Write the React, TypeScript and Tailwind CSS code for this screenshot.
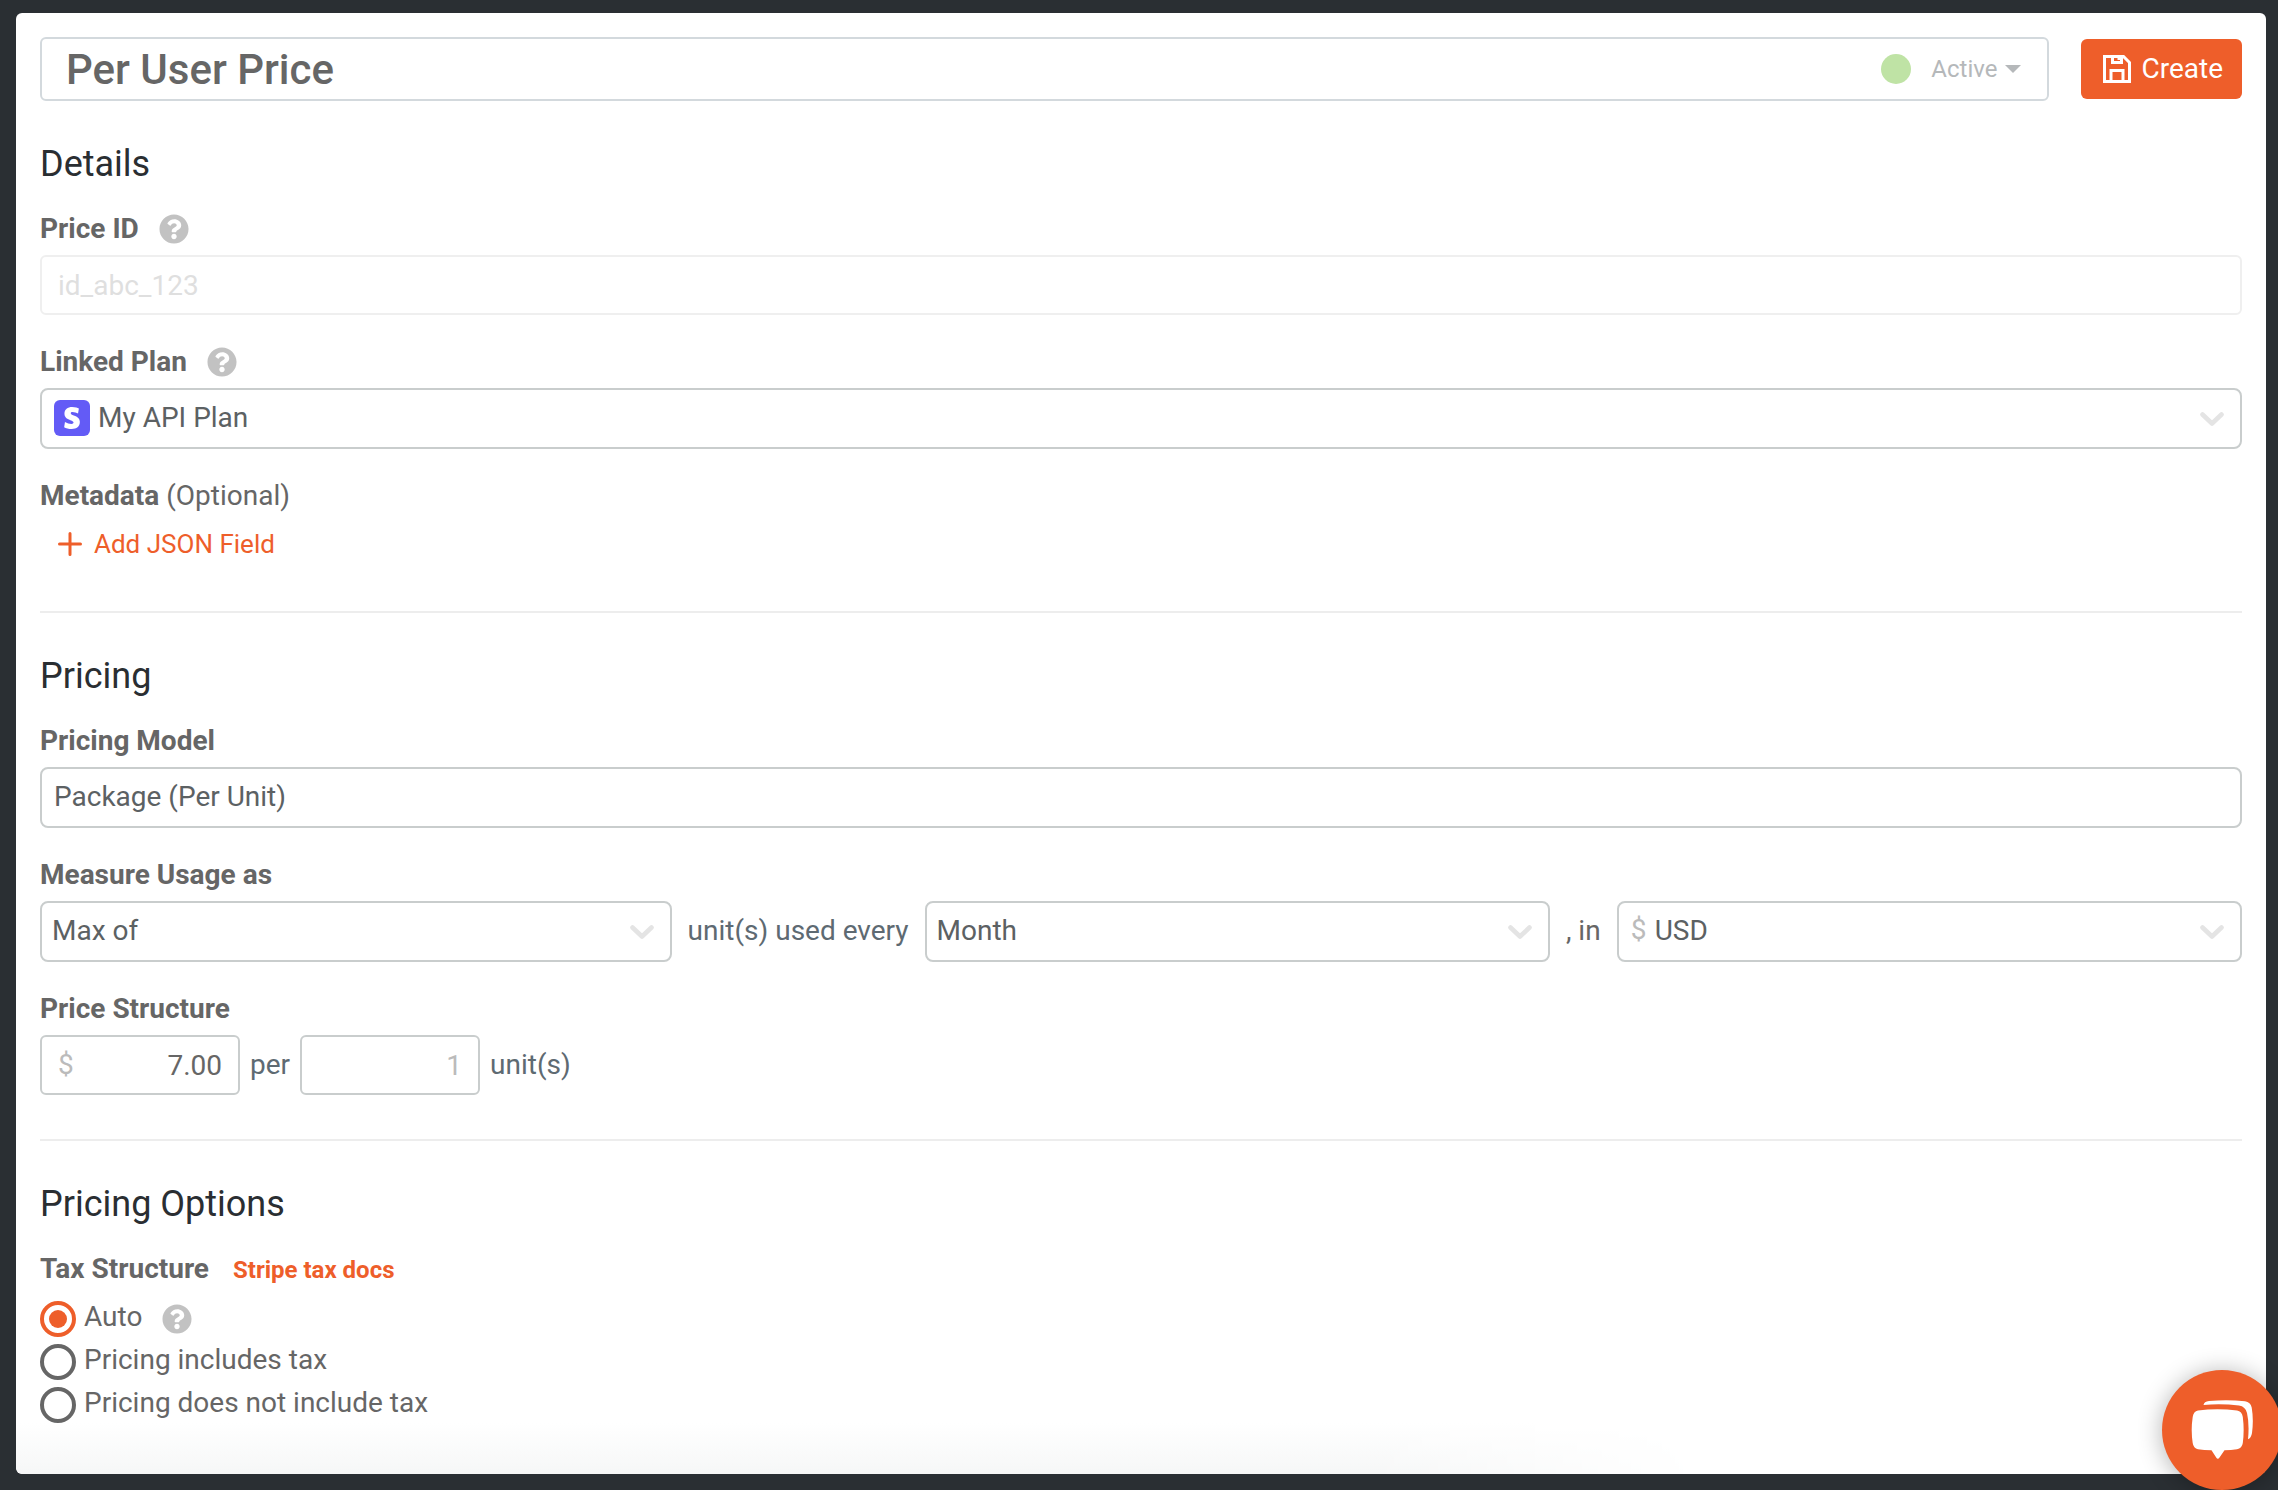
import React, { useState } from 'react';
import { FaQuestionCircle } from 'react-icons/fa';
import { SiStripe } from 'react-icons/si';

const taxOptions = [
  { value: 'auto', label: 'Auto', help: true },
  { value: 'inclusive', label: 'Pricing includes tax', help: false },
  { value: 'exclusive', label: 'Pricing does not include tax', help: false },
];

const SaveIcon: React.FC = () => (
  <svg width="28" height="28" viewBox="0 0 28 28" fill="none" stroke="currentColor" strokeWidth="3" aria-hidden="true">
    <path d="M1.5 1.5H20.5L26.5 7.5V26.5H1.5Z" />
    <path d="M9.5 1.5V7.5H18.5V1.5" />
    <path d="M8 26.5V15.5H20V26.5" />
    <path d="M14.5 4H18" strokeWidth="2" />
  </svg>
);

const Chevron: React.FC = () => (
  <svg
    className="pointer-events-none absolute top-6 right-[18px]"
    width="24"
    height="15"
    viewBox="0 0 24 15"
    fill="none"
    stroke="#e4e4e4"
    strokeWidth="4.6"
    strokeLinecap="round"
    strokeLinejoin="round"
    aria-hidden="true"
  >
    <path d="M2.5 2.5L12 11.5L21.5 2.5" />
  </svg>
);

const ChatIcon: React.FC = () => (
  <svg width="62" height="60" viewBox="0 0 62 60" fill="#fff" aria-hidden="true">
    <path d="M7 10.5Q26.5 8 46 10.5Q51 11.2 51.8 17Q53.5 30 51.8 43Q51 48.5 46 49.2Q40 50 33.5 50.3L28.5 57.5Q26.8 60 25.2 57.5L20.5 50.3Q13 50 7 49.2Q2.5 48.5 1.7 43Q-.3 30 1.7 17Q2.5 11.2 7 10.5Z" />
    <path d="M12.5 5Q13 1.6 18 1Q36-.8 54 1.2Q59.5 2 60.7 7.5Q62.8 20 61 33Q60 38.5 57 39.3Q58.5 24 56 13Q54.5 6.5 48 5.5Q30 3.5 12.5 5Z" />
  </svg>
);

const Help: React.FC<{ text: string }> = ({ text }) => (
  <button type="button" aria-label={text} className="text-[#c2c2c2]">
    <FaQuestionCircle size={30} />
  </button>
);

interface SelectBoxProps {
  id: string;
  label?: string;
  options: string[];
  chevron?: boolean;
  prefix?: React.ReactNode;
  className?: string;
}

const SelectBox: React.FC<SelectBoxProps> = ({ id, label, options, chevron = true, prefix, className = 'pl-2.5' }) => (
  <div className="relative min-w-0">
    {prefix}
    <select
      id={id}
      aria-label={label}
      className={`block h-[61px] w-full appearance-none rounded-lg border-2 border-[#c9cdcd] bg-white pr-12 pb-0.5 text-[28px] text-[#5c6163] ${className}`}
    >
      {options.map(option => (
        <option key={option}>{option}</option>
      ))}
    </select>
    {chevron && <Chevron />}
  </div>
);

const App: React.FC = () => {
  const [name, setName] = useState<string>('Per User Price');
  const [amount, setAmount] = useState<string>('7.00');
  const [tax, setTax] = useState<string>('auto');

  return (
    <div className="flex min-h-screen bg-[#2a2f33] pt-[13px] pr-3 pb-4 pl-4 font-[Roboto,sans-serif] text-[28px] leading-9 text-[#666]">
      <form className="flex flex-1 flex-col rounded-md bg-white px-6 pt-6" onSubmit={e => e.preventDefault()}>
        <header className="mb-[43px] flex items-center gap-8">
          <div className="flex h-16 flex-1 items-center rounded-md border-2 border-[#d3d9dd] pr-[26px] pl-6">
            <input
              aria-label="Price name"
              value={name}
              onChange={e => setName(e.target.value)}
              className="h-full min-w-0 flex-1 text-[42px] font-medium outline-none"
            />
            <button type="button" className="flex items-center text-2xl text-[#b5b8ba]">
              <span className="mr-5 size-[30px] rounded-full bg-[#bfe3a5]" />
              Active
              <svg className="ml-2" width="16" height="8" viewBox="0 0 16 8" fill="currentColor" aria-hidden="true">
                <path d="M0 0H16L8 8Z" />
              </svg>
            </button>
          </div>
          <button type="submit" className="flex h-15 items-center gap-2.5 rounded-md bg-[#ee5e2a] pr-[19px] pl-[22px] text-white">
            <SaveIcon />
            Create
          </button>
        </header>

        <section>
          <h2 className="mb-[27px] text-4xl leading-10 text-[#2a2e32]">Details</h2>
          <div className="flex flex-col gap-[29px]">
            <div>
              <div className="mb-2 flex h-9 items-center gap-5">
                <label htmlFor="price-id" className="font-bold">Price ID</label>
                <Help text="About price IDs" />
              </div>
              <input
                id="price-id"
                placeholder="id_abc_123"
                className="block h-15 w-full rounded-md border-2 border-[#efefef] px-4 placeholder:text-[#dfdfdf]"
              />
            </div>
            <div>
              <div className="mb-2 flex h-9 items-center gap-5">
                <label htmlFor="linked-plan" className="font-bold">Linked Plan</label>
                <Help text="About linked plans" />
              </div>
              <SelectBox
                id="linked-plan"
                options={['My API Plan']}
                className="pl-14"
                prefix={
                  <span className="pointer-events-none absolute top-3 left-3.5 flex size-9 items-center justify-center rounded-md bg-[#635bf6] text-white">
                    <SiStripe size={22} />
                  </span>
                }
              />
            </div>
            <div>
              <p><span className="font-bold">Metadata</span> (Optional)</p>
              <button type="button" className="mt-3.5 ml-[18px] flex items-center gap-3 text-[26px] leading-8 text-[#ee5e2a]">
                <svg width="24" height="24" viewBox="0 0 24 24" stroke="currentColor" strokeWidth="3" strokeLinecap="round" aria-hidden="true">
                  <path d="M1.5 12H22.5M12 1.5V22.5" />
                </svg>
                Add JSON Field
              </button>
            </div>
          </div>
        </section>

        <hr className="mt-[51px] mb-[43px] border-t-2 border-[#ededed]" />

        <section>
          <h2 className="mb-[27px] text-4xl leading-10 text-[#2a2e32]">Pricing</h2>
          <div className="flex flex-col gap-[29px]">
            <div>
              <label htmlFor="pricing-model" className="mb-2 block font-bold">Pricing Model</label>
              <SelectBox id="pricing-model" options={['Package (Per Unit)']} chevron={false} className="pl-3" />
            </div>
            <div>
              <label htmlFor="usage" className="mb-2 block font-bold">Measure Usage as</label>
              <div className="grid grid-cols-[101fr_auto_100fr_auto_100fr] items-center gap-4">
                <SelectBox id="usage" options={['Max of', 'Sum of', 'Last of']} />
                <span className="pb-0.5 text-[#5e6a72]">unit(s) used every</span>
                <SelectBox id="interval" label="Billing interval" options={['Month', 'Year', 'Week', 'Day']} />
                <span className="pb-0.5">, in</span>
                <SelectBox
                  id="currency"
                  label="Currency"
                  options={['USD', 'EUR', 'GBP']}
                  className="pl-9"
                  prefix={<span className="pointer-events-none absolute top-[11px] left-3.5 text-[#bbb]">$</span>}
                />
              </div>
            </div>
            <div>
              <label htmlFor="amount" className="mb-2 block font-bold">Price Structure</label>
              <div className="flex items-center gap-2.5">
                <div className="flex h-15 w-[200px] items-center rounded-md border-2 border-[#c9cdcd] px-4">
                  <span className="text-[#bbb]">$</span>
                  <input
                    id="amount"
                    value={amount}
                    onChange={e => setAmount(e.target.value)}
                    className="h-full min-w-0 flex-1 text-right outline-none"
                  />
                </div>
                <label htmlFor="units" className="text-[#5e6a72]">per</label>
                <input
                  id="units"
                  placeholder="1"
                  className="h-15 w-[180px] rounded-md border-2 border-[#c9cdcd] px-4 text-right placeholder:text-[#bbb]"
                />
                <span className="text-[#5e6a72]">unit(s)</span>
              </div>
            </div>
          </div>
        </section>

        <hr className="mt-11 mb-[43px] border-t-2 border-[#ededed]" />

        <section>
          <h2 className="mb-[27px] text-4xl leading-10 text-[#2a2e32]">Pricing Options</h2>
          <fieldset>
            <legend className="mb-3.5 flex items-baseline gap-6 font-bold">
              Tax Structure
              <a href="#tax-docs" className="text-2xl leading-8 text-[#ee5e2a]">Stripe tax docs</a>
            </legend>
            <div className="flex flex-col gap-[7px]">
              {taxOptions.map(option => (
                <div key={option.value} className="flex h-9 gap-2">
                  <input
                    type="radio"
                    id={option.value}
                    name="tax"
                    checked={tax === option.value}
                    onChange={() => setTax(option.value)}
                    className="grid size-9 appearance-none place-items-center rounded-full border-4 border-[#666] checked:border-[#ee5e2a] checked:before:size-[18px] checked:before:rounded-full checked:before:bg-[#ee5e2a]"
                  />
                  <label htmlFor={option.value} className="leading-8">{option.label}</label>
                  {option.help && (
                    <span className="ml-3 flex items-center">
                      <Help text="About automatic tax" />
                    </span>
                  )}
                </div>
              ))}
            </div>
          </fieldset>
        </section>

        <div className="-mx-6 min-h-12 flex-1 rounded-b-md bg-linear-to-b from-white to-[#f6f7f7] [mask-image:linear-gradient(to_right,black_60%,transparent_75%)]" />
      </form>

      <button
        type="button"
        aria-label="Open chat"
        className="fixed -right-1 bottom-0 flex size-30 items-center justify-center rounded-full bg-[#ee5e2a] shadow-[0_2px_24px_rgba(0,0,0,0.3)]"
      >
        <ChatIcon />
      </button>
    </div>
  );
};

export default App;
